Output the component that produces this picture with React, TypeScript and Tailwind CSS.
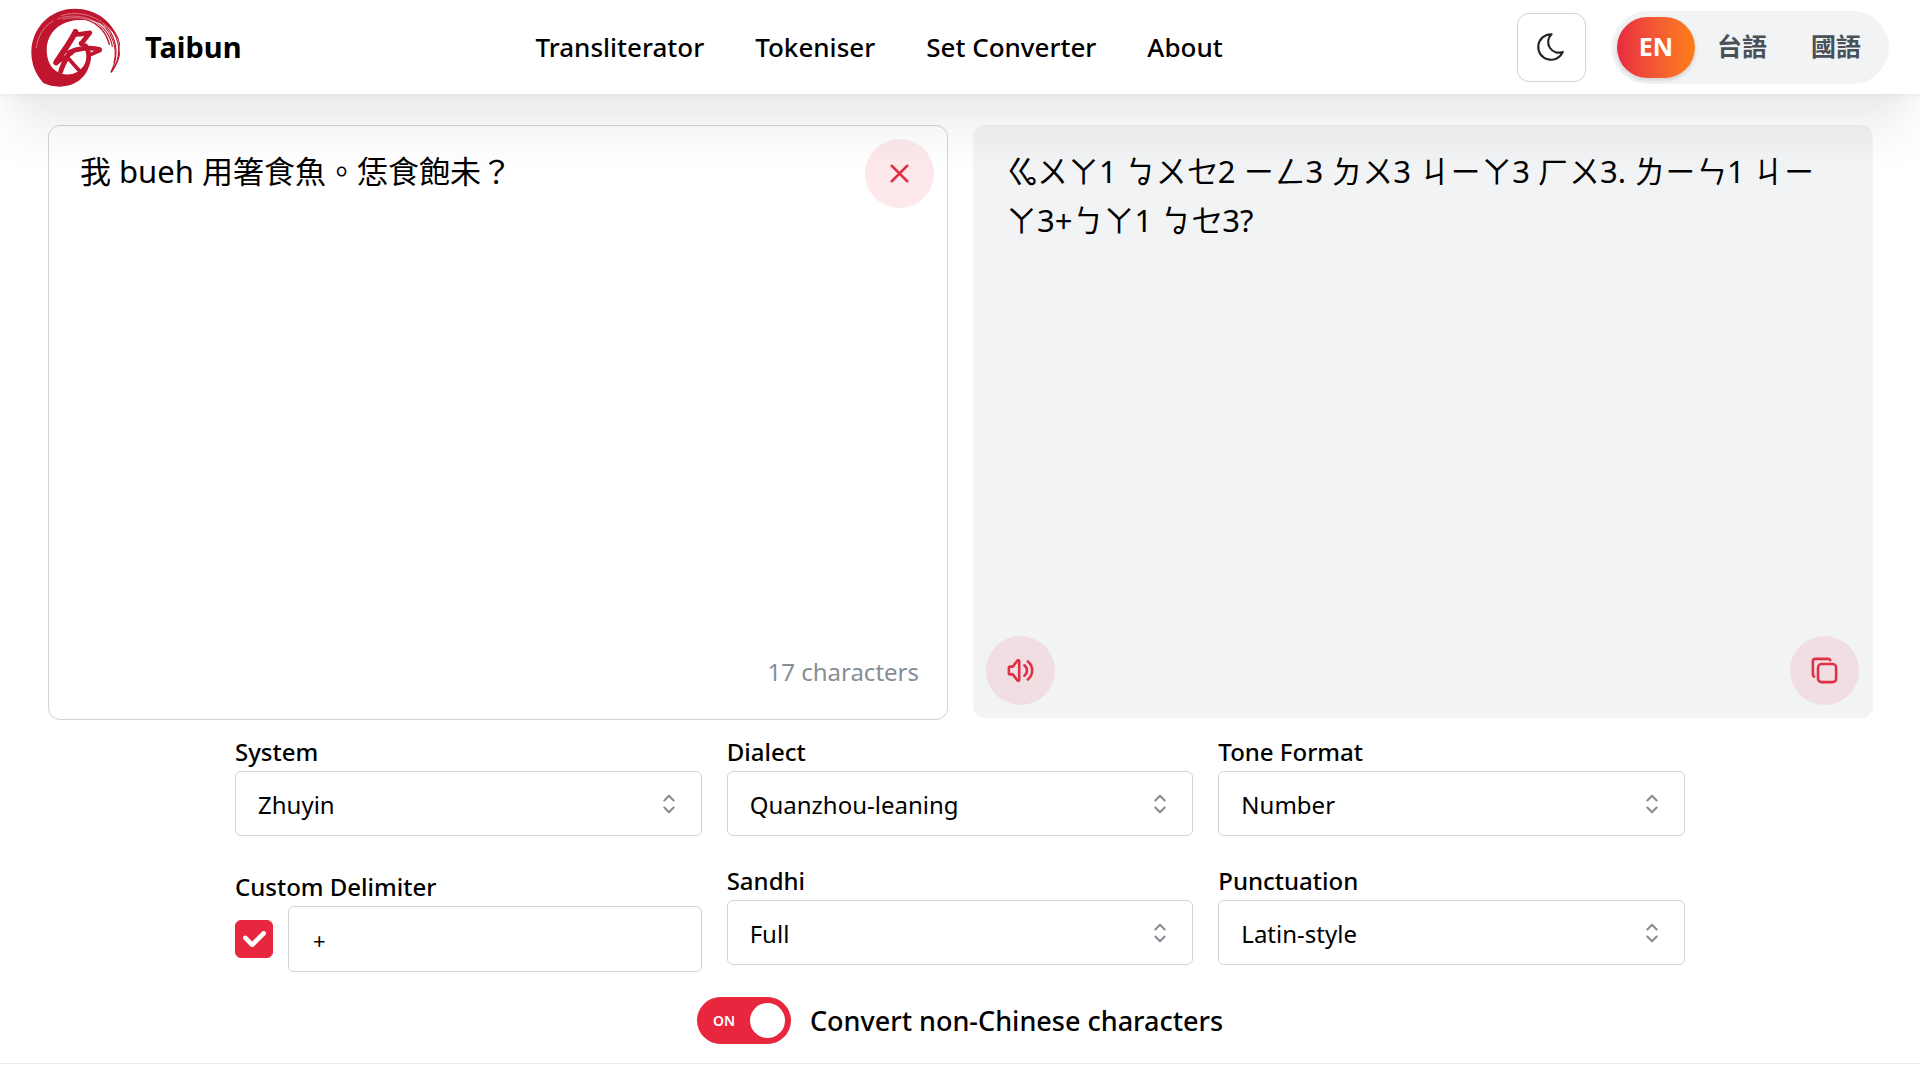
import { useState, type ReactNode } from "react";

const iconBase = {
  viewBox: "0 0 24 24",
  fill: "none",
  stroke: "currentColor",
  strokeLinecap: "round" as const,
  strokeLinejoin: "round" as const,
  "aria-hidden": true,
};

function Logo() {
  return (
    <svg viewBox="92 23 266 236" className="h-[79px] w-[89px]" role="img" aria-label="Taibun logo">
      <path
        fill="#bf152f"
        fillRule="evenodd"
        d="M130 248C105 222 93 190 93 154C94 82 150 25 222 25C286 25 336 62 351 118C342 100 330 86 316 76C292 62 262 57 232 59C178 62 139 98 139 148C139 192 162 222 205 222C242 222 262 194 266 158L270 163C272 212 240 257 178 258C160 258 142 254 130 248Z"
      />
      <g fill="none" stroke="#bf152f" strokeLinecap="round">
        <path d="M308 62C356 98 370 158 333 214" strokeWidth="3.5" />
        <path d="M300 62C346 98 360 158 331 214" strokeWidth="3.5" />
        <path d="M290 60C334 92 352 140 340 186" strokeWidth="3" />
        <path d="M322 72C362 108 372 158 335 210" strokeWidth="3" />
        <path d="M254 57C294 68 318 98 326 132" strokeWidth="4" />
        <path d="M276 58C312 80 330 104 335 138" strokeWidth="3.5" />
      </g>
      <g fill="none" stroke="#fff" strokeWidth="1.2" strokeLinecap="round">
        <path d="M182 46C232 28 300 46 334 96" />
        <path d="M172 56C212 38 282 44 326 100" />
        <path d="M186 57C220 46 276 52 312 80" />
        <path d="M108 142C112 104 134 74 158 62" />
      </g>
      <g fill="none" stroke="#bf152f" strokeLinecap="round" strokeLinejoin="round">
        <path d="M225 94C212 122 190 150 167 186" strokeWidth="17" />
        <path d="M168 188L188 174L214 158" strokeWidth="11" />
        <path d="M202 166C193 184 184 198 181 212" strokeWidth="15" />
        <path d="M222 102L240 101L268 97L242 130" strokeWidth="14" />
        <path d="M240 128L256 138" strokeWidth="11" />
        <path d="M204 156C230 144 270 138 297 147" strokeWidth="14" />
        <path d="M298 150L272 161" strokeWidth="11" />
        <path d="M255 136C270 158 266 190 250 206C238 220 220 228 200 230" strokeWidth="14" />
        <path d="M206 176L238 212" strokeWidth="11" />
      </g>
    </svg>
  );
}

function ActionButton({ label, children, onClick }: { label: string; children: ReactNode; onClick?: () => void }) {
  return (
    <button
      type="button"
      aria-label={label}
      onClick={onClick}
      className="flex size-[69px] items-center justify-center rounded-full bg-[#e8273f]/10 text-[#e03047]"
    >
      {children}
    </button>
  );
}

function SelectField({ id, label, options }: { id: string; label: string; options: string[] }) {
  return (
    <div>
      <label htmlFor={id} className="block text-2xl/[39px] font-medium">
        {label}
      </label>
      <div className="relative">
        <select
          id={id}
          className="block h-[65px] w-full appearance-none rounded-md border border-[#ced4da] bg-white pt-0.5 pr-16 pl-[22px] text-2xl"
        >
          {options.map((o) => (
            <option key={o}>{o}</option>
          ))}
        </select>
        <svg
          {...iconBase}
          strokeWidth="1.8"
          className="pointer-events-none absolute top-1/2 right-[19px] size-7 -translate-y-1/2 text-[#868e96]"
        >
          <path d="M8 9l4-4l4 4M16 15l-4 4l-4-4" />
        </svg>
      </div>
    </div>
  );
}

const navItems = ["Transliterator", "Tokeniser", "Set Converter", "About"];
const languages = ["EN", "台語", "國語"];

export default function App() {
  const [text, setText] = useState("我 bueh 用箸食魚。恁食飽未？");
  const [language, setLanguage] = useState("EN");

  return (
    <div
      lang="zh-Hant"
      className="min-h-screen bg-white font-['Noto_Sans','Noto_Sans_CJK_TC',sans-serif] text-black"
    >
      <header className="relative z-10 flex h-[94px] items-center justify-between bg-white px-[31px] shadow-[0_2px_5px_rgba(0,0,0,0.05),0_56px_44px_-11px_rgba(0,0,0,0.05),0_27px_27px_-11px_rgba(0,0,0,0.04)]">
        <a href="#home" className="flex items-center gap-[25px]">
          <Logo />
          <span className="text-[29px]/[40px] font-bold">Taibun</span>
        </a>
        <nav className="flex gap-[51px] text-[26px]/[40px] font-medium">
          {navItems.map((item) => (
            <a key={item} href={"#" + item.toLowerCase().replace(" ", "-")}>
              {item}
            </a>
          ))}
        </nav>
        <div className="flex items-center gap-[25px]">
          <button
            type="button"
            aria-label="Toggle colour scheme"
            className="flex size-[69px] items-center justify-center rounded-xl border border-[#ced4da] text-[#212529]"
          >
            <svg {...iconBase} strokeWidth="1.5" className="size-[34px]">
              <path d="M12 3c.132 0 .263 0 .393 0a7.5 7.5 0 0 0 7.92 12.446a9 9 0 1 1-8.313-12.454z" />
            </svg>
          </button>
          <div className="flex rounded-full bg-[#f1f3f5] p-1.5" role="group" aria-label="Language">
            {languages.map((l) => (
              <button
                key={l}
                type="button"
                onClick={() => setLanguage(l)}
                aria-pressed={l === language}
                className={
                  l === language
                    ? "h-[61px] rounded-full bg-linear-to-r from-[#e8273f] to-[#fd7e14] px-[22px] text-[25px] font-bold text-white shadow-[0_2px_4px_rgba(0,0,0,0.15)]"
                    : "h-[61px] px-[22px] text-[25px] font-bold text-[#495057]"
                }
              >
                {l}
              </button>
            ))}
          </div>
        </div>
      </header>

      <main>
        <div className="grid grid-cols-2 items-start gap-[25px] pt-[31px] pr-[47px] pl-12">
          <section className="relative">
            <textarea
              aria-label="Text to transliterate"
              spellCheck={false}
              value={text}
              onChange={(e) => setText(e.target.value)}
              className="block min-h-[595px] w-full resize-none rounded-xl border border-[#ced4da] bg-white py-[21px] pr-24 pl-[31px] text-[31px]/[49px]"
            />
            <div className="absolute top-3.5 right-3.5">
              <ActionButton label="Clear text" onClick={() => setText("")}>
                <svg {...iconBase} strokeWidth="2" className="size-[31px]">
                  <path d="M18 6l-12 12M6 6l12 12" />
                </svg>
              </ActionButton>
            </div>
            <p className="absolute right-[29px] bottom-[29px] text-2xl/[39px] text-[#868e96]">
              {text.length} characters
            </p>
          </section>
          <section className="flex min-h-[593px] flex-col justify-between rounded-xl bg-[#f1f3f5]">
            <p className="pt-[22px] pr-7 pl-[33px] text-[31px]/[49px]">
              ㆣㄨㄚ1 ㆠㄨㆤ2 ㄧㄥ3 ㄉㄨ3 ㄐㄧㄚ3 ㄏㄨ3. ㄌㄧㄣ1 ㄐㄧㄚ3+ㄅㄚ1 ㆠㆤ3?
            </p>
            <div className="flex justify-between pr-3.5 pb-[13px] pl-[13px]">
              <ActionButton label="Play audio">
                <svg {...iconBase} strokeWidth="2" className="size-[31px]">
                  <path d="M15 8a5 5 0 0 1 0 8M17.7 5a9 9 0 0 1 0 14M6 15h-2a1 1 0 0 1-1-1v-4a1 1 0 0 1 1-1h2l3.5-4.5a.8.8 0 0 1 1.5.5v14a.8.8 0 0 1-1.5.5l-3.5-4.5" />
                </svg>
              </ActionButton>
              <ActionButton label="Copy result">
                <svg {...iconBase} strokeWidth="2" className="size-[31px]">
                  <rect x="7" y="7" width="14" height="14" rx="2.667" />
                  <path d="M4.012 16.737a2.005 2.005 0 0 1-1.012-1.737v-10c0-1.1.9-2 2-2h10c.75 0 1.158.385 1.5 1" />
                </svg>
              </ActionButton>
            </div>
          </section>
        </div>

        <form className="mx-auto max-w-[1450px] pt-3">
          <div className="grid grid-cols-3 gap-[25px]">
            <SelectField id="system" label="System" options={["Zhuyin", "Tailo", "POJ", "TLPA"]} />
            <SelectField id="dialect" label="Dialect" options={["Quanzhou-leaning", "Zhangzhou-leaning"]} />
            <SelectField id="tone" label="Tone Format" options={["Number", "Mark", "Strip"]} />
            <div className="pt-1.5">
              <label htmlFor="delimiter" className="block text-2xl/[39px] font-medium">
                Custom Delimiter
              </label>
              <div className="flex items-center gap-[15px]">
                <span className="relative block">
                  <input
                    type="checkbox"
                    defaultChecked
                    aria-label="Use custom delimiter"
                    className="peer block size-[38px] appearance-none rounded-md border border-[#ced4da] checked:border-[#e8273f] checked:bg-[#e8273f]"
                  />
                  <svg
                    viewBox="0 0 10 7"
                    fill="#fff"
                    className="pointer-events-none absolute inset-0 m-auto hidden w-[23px] peer-checked:block"
                    aria-hidden
                  >
                    <path d="M4 4.586L1.707 2.293A1 1 0 1 0 .293 3.707l3 3a.997.997 0 0 0 1.414 0l5-5A1 1 0 1 0 8.293.293L4 4.586z" />
                  </svg>
                </span>
                <input
                  id="delimiter"
                  type="text"
                  defaultValue="+"
                  className="h-[66px] min-w-0 grow rounded-md border border-[#ced4da] bg-white px-6 pt-0.5 text-[22px]"
                />
              </div>
            </div>
            <SelectField id="sandhi" label="Sandhi" options={["Full", "Auto", "None"]} />
            <SelectField id="punctuation" label="Punctuation" options={["Latin-style", "Chinese-style"]} />
          </div>
          <div className="flex items-center justify-center gap-[19px] pt-[25px] pb-[19px]">
            <span className="relative block">
              <input
                id="convert"
                type="checkbox"
                role="switch"
                defaultChecked
                className="peer block h-[47px] w-[94px] appearance-none rounded-full bg-gray-300 checked:bg-[#e8273f]"
              />
              <span className="pointer-events-none absolute inset-0 flex items-center justify-between pr-1.5 pl-4 text-sm font-semibold text-white">
                ON
                <span className="size-[35px] rounded-full bg-white" />
              </span>
            </span>
            <label htmlFor="convert" className="text-[27px]/[40px] font-medium">
              Convert non-Chinese characters
            </label>
          </div>
        </form>
      </main>
      <footer className="border-t border-[#e9ecef]" />
    </div>
  );
}
